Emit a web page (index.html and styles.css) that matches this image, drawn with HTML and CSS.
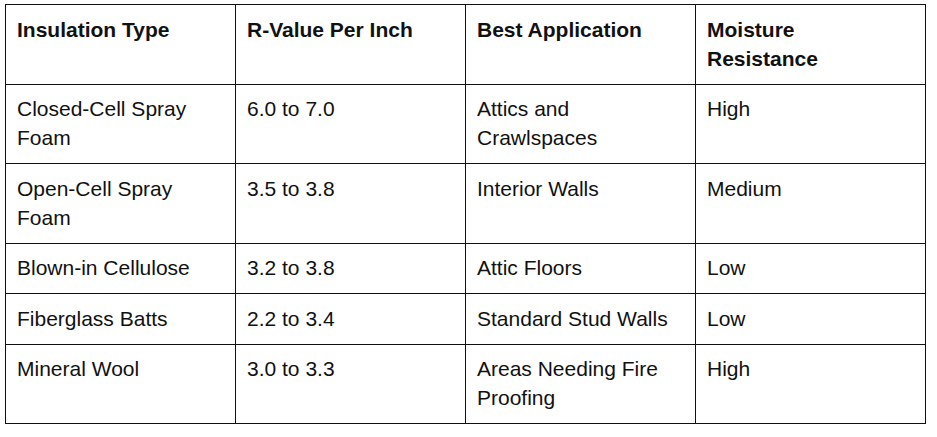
FILE: index.html
```html
<!DOCTYPE html>
<html lang="en">
<head>
<meta charset="utf-8">
<title>Insulation Types</title>
<link rel="stylesheet" href="styles.css">
</head>
<body>
<table class="ins-table">
  <thead>
    <tr>
      <th>Insulation Type</th>
      <th>R-Value Per Inch</th>
      <th>Best Application</th>
      <th>Moisture Resistance</th>
    </tr>
  </thead>
  <tbody>
    <tr>
      <td>Closed-Cell Spray Foam</td>
      <td>6.0 to 7.0</td>
      <td>Attics and Crawlspaces</td>
      <td>High</td>
    </tr>
    <tr>
      <td>Open-Cell Spray Foam</td>
      <td>3.5 to 3.8</td>
      <td>Interior Walls</td>
      <td>Medium</td>
    </tr>
    <tr>
      <td>Blown-in Cellulose</td>
      <td>3.2 to 3.8</td>
      <td>Attic Floors</td>
      <td>Low</td>
    </tr>
    <tr>
      <td>Fiberglass Batts</td>
      <td>2.2 to 3.4</td>
      <td>Standard Stud Walls</td>
      <td>Low</td>
    </tr>
    <tr>
      <td>Mineral Wool</td>
      <td>3.0 to 3.3</td>
      <td>Areas Needing Fire Proofing</td>
      <td>High</td>
    </tr>
  </tbody>
</table>
</body>
</html>
```

FILE: styles.css
```css
html, body {
  margin: 0;
  padding: 0;
  background: #ffffff;
}

body {
  padding: 4px 0 0 5px;
  font-family: "Liberation Sans", Arial, sans-serif;
  color: #111111;
}

.ins-table {
  border-collapse: collapse;
  table-layout: fixed;
  width: 921px;
  font-size: 21px;
  line-height: 29px;
}

.ins-table th,
.ins-table td {
  border: 1px solid #111111;
  padding: 9.5px 20px 11px 11px;
  text-align: left;
  vertical-align: top;
}

.ins-table th {
  font-weight: bold;
}
```
